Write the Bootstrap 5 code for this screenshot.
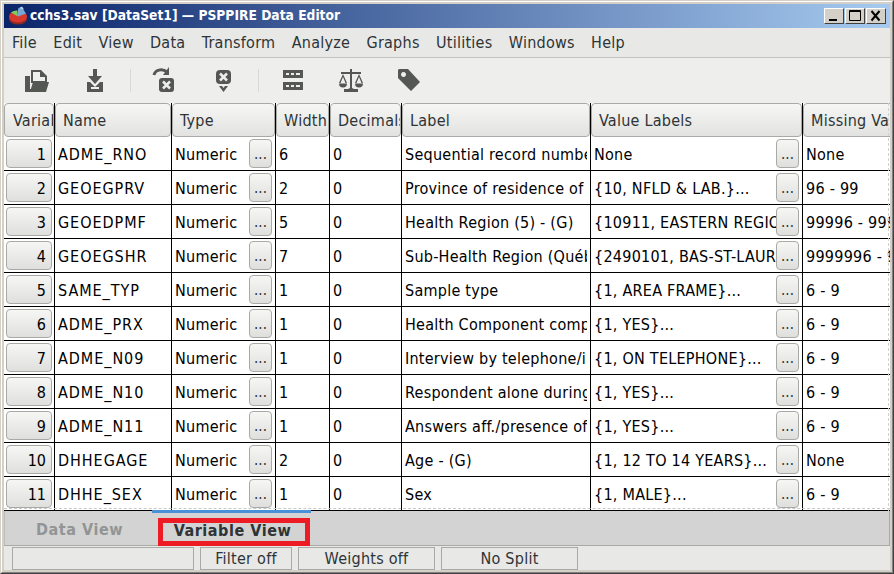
<!DOCTYPE html>
<html lang="en">
<head>
<meta charset="utf-8">
<title>PSPPIRE Data Editor</title>
<link href="https://cdn.jsdelivr.net/npm/bootstrap@5.3.0/dist/css/bootstrap.min.css" rel="stylesheet">
<style>
html,body{margin:0;height:574px;overflow:hidden;background:#d4d0c8;}
body{font-family:"DejaVu Sans Condensed","DejaVu Sans",sans-serif;font-stretch:condensed;font-size:16px;letter-spacing:.25px;color:#2e3436;line-height:1;}
.app-win{width:894px;height:574px;border:1px solid;border-color:#d4d0c8 #404040 #404040 #d4d0c8;}
.app-frame{height:100%;padding:2px;border:1px solid;border-color:#fff #808080 #808080 #fff;display:flex;flex-direction:column;background:#d4d0c8;}
.title-bar{height:24px;flex:none;background:linear-gradient(90deg,#0a246a,#a6caf0);color:#fff;font-weight:700;font-size:13.7px;letter-spacing:0;padding-left:4px;gap:2px;}
.win-btns{margin-left:auto;margin-right:4px;gap:1px;}
.win-btn{width:20px;height:16px;background:#d4d0c8;border:1px solid;border-color:#fff #404040 #404040 #fff;display:block;}
.menu-bar{height:30px;flex:none;background:#e8e8e7;border-bottom:1px solid #c3c3c0;padding-left:8px;gap:16.35px;}
.tool-bar{height:45px;flex:none;background:#eeeeec;position:relative;}
.tool-item{position:absolute;top:8px;width:30px;height:28px;}
.tool-sep{position:absolute;top:11px;width:1px;height:23px;background:#d8d8d6;}
.grid-wrap{height:408px;flex:none;overflow:hidden;background:#fff;position:relative;}
.var-table{table-layout:fixed;width:1000px;border-collapse:separate;border-spacing:0;color:#000;}
.var-table th{height:34px;padding:0;border-right:1px solid #000;font-weight:400;}
.head-box{height:34px;line-height:32px;background:linear-gradient(#f6f6f5,#e2e2e0);border:1px solid #a9a9a6;border-radius:4px;color:#2e3436;padding:1px 0 0 7px;white-space:nowrap;overflow:hidden;}
.var-table th:first-child .head-box{padding-left:8px;}
.var-table td{height:34px;border-right:1px solid #000;border-bottom:1px solid #000;padding:2px 0 0 3px;white-space:nowrap;overflow:hidden;}
.name-col{letter-spacing:.95px;}
.cell-clip{overflow:hidden;margin-right:3px;}
.cell-flex{display:flex;align-items:center;justify-content:space-between;padding-right:3px;height:32px;margin-top:-2px;overflow:hidden;}
.cell-text{overflow:hidden;flex:1;min-width:0;padding-top:2px;}
.dot-btn{flex:none;width:23px;height:29px;padding:0;border:1px solid #a9a9a6;border-radius:4px;background:linear-gradient(#f6f6f5,#dfdfdd);font-size:15px;line-height:24px;color:#2e3436;}
.var-table td.num-cell{padding:0 3px 0 2px;}
.num-btn{display:block;width:46px;height:29px;padding:1px 5px 0 0;border:1px solid #a9a9a6;border-radius:4px;background:linear-gradient(#f6f6f5,#dfdfdd);text-align:right;font-size:16px;color:#000;line-height:27px;}
.edge-line{position:absolute;right:1px;top:0;bottom:0;width:0;border-right:1px dashed #d0d0d0;}
.edge-bottom{position:absolute;left:0;right:0;bottom:2px;height:0;border-bottom:1px dashed #c8c8c8;}
.tab-strip{height:35px;flex:none;background:#d3d3d3;position:relative;border-bottom:1px solid #a9a9a6;border-right:1px solid #a9a9a6;border-left:1px solid #bdbdbb;font-weight:700;letter-spacing:.55px;}
.tab-line{position:absolute;left:147px;top:-1px;width:159px;height:3px;background:#4a90d9;}
.tab-off{position:absolute;left:31px;top:8px;height:26px;line-height:22px;color:#929595;}
.tab-on{position:absolute;left:153px;top:7px;width:152px;height:28px;border:5px solid #ed1c24;line-height:16px;padding-right:3px;text-align:center;color:#2e3436;z-index:2;}
.stat-bar{height:24px;flex:none;background:#e8e8e7;gap:6px;padding-left:8px;padding-top:1px;}
.stat-cell{height:23px;border:1px solid #a9a9a6;text-align:center;line-height:21px;color:#2e3436;}
.w1{width:182px}.w2{width:92px}.w3{width:137px}
</style>
</head>
<body>
<div class="app-win"><div class="app-frame">
  <div class="title-bar d-flex align-items-center">
    <svg width="20" height="20" viewBox="0 0 20 20"><ellipse cx="10" cy="13" rx="9" ry="5.500" fill="#8e2a22"/><ellipse cx="10" cy="10.500" rx="9" ry="6" fill="#d8392f"/><path d="M10 10.500V2.500l4-1 4 6z" fill="#7aa6d6"/><path d="M10 10.500L3 6.500a9 6 0 0 1 6-2z" fill="#7ecb5e"/><path d="M11 2l3-1.500 2 3z" fill="#b6d8f0"/></svg>
    <span>cchs3.sav [DataSet1] — PSPPIRE Data Editor</span>
    <div class="win-btns d-flex">
      <span class="win-btn"><svg width="18" height="14" viewBox="0 0 18 14" class="d-block"><rect x="4" y="10" width="8" height="2" fill="#000"/></svg></span>
      <span class="win-btn"><svg width="18" height="14" viewBox="0 0 18 14" class="d-block"><path d="M3.500 1.500h11v10h-11z M3 2.500h12" fill="none" stroke="#000"/></svg></span>
      <span class="win-btn"><svg width="18" height="14" viewBox="0 0 18 14" class="d-block"><path d="M4.500 2l8 9.500M12.500 2l-8 9.500" stroke="#000" stroke-width="2"/></svg></span>
    </div>
  </div>
  <div class="menu-bar d-flex align-items-center">
    <span>File</span><span>Edit</span><span>View</span><span>Data</span><span>Transform</span><span>Analyze</span><span>Graphs</span><span>Utilities</span><span>Windows</span><span>Help</span>
  </div>
  <div class="tool-bar">
    <svg class="tool-item" style="left:18px" viewBox="0 0 30 28" fill="#555753"><path d="M3 10h5v13h2v3H3z"/><path fill-rule="evenodd" d="M9 4h10l6 6v7H9zM11 6v9h12v-4h-5V6z"/><path d="M11 16h16l-3 10H8z"/></svg>
    <svg class="tool-item" style="left:76px" viewBox="0 0 30 28" fill="#555753"><path d="M13 3h4v7h5l-7 8-7-8h5z"/><path fill-rule="evenodd" d="M7 16h3l5 5 5-5h3v10H7zM11 21v2h8v-2z"/></svg>
    <div class="tool-sep" style="left:126px"></div>
    <svg class="tool-item" style="left:144px" viewBox="0 0 30 28"><path d="M6 9c1-5 8-7 13-3" fill="none" stroke="#555753" stroke-width="3"/><path d="M21 1v8h-6z" fill="#555753"/><rect x="11" y="12" width="15" height="14" rx="3" fill="#555753"/><path d="M15 15.500l7 7m0-7l-7 7" stroke="#eeeeec" stroke-width="2.500"/></svg>
    <svg class="tool-item" style="left:205px" viewBox="0 0 30 28"><rect x="7" y="4" width="15" height="14" rx="4" fill="#555753"/><path d="M11 7.500l7 7m0-7l-7 7" stroke="#eeeeec" stroke-width="2.500"/><path d="M10 20h3l1.500 2 1.500-2h3l-4.500 6z" fill="#555753"/></svg>
    <div class="tool-sep" style="left:254px"></div>
    <svg class="tool-item" style="left:274px" viewBox="0 0 30 28" fill="#555753"><path fill-rule="evenodd" d="M5 4h20v8H5zM8 7v2h3V7zM13 7v2h3V7zM18 7v2h4V7z"/><path fill-rule="evenodd" d="M5 16h20v8H5zM8 19v2h3v-2zM13 19v2h3v-2zM18 19v2h4v-2z"/></svg>
    <svg class="tool-item" style="left:332px" viewBox="0 0 30 28" fill="#555753"><path d="M14 3h2v3h9v2H16v14l2 1h4v3H8v-3h4l2-1V8H5V6h9z"/><path d="M7 8L3 17h1.500L7 11l2.500 6H11zM23 8l-4 9h1.500L23 11l2.500 6H27z"/><path d="M3 17.500h8a4 4 0 0 1-8 0zM19 17.500h8a4 4 0 0 1-8 0z"/></svg>
    <svg class="tool-item" style="left:389px" viewBox="0 0 30 28" fill="#555753"><path fill-rule="evenodd" d="M6 3h9l12 13-9 9L5 12V4zM10.500 6a2.500 2.500 0 1 0 .01 0z"/></svg>
  </div>
  <div class="grid-wrap">
    <table class="var-table">
      <colgroup><col style="width:51px"><col style="width:117px"><col style="width:104px"><col style="width:54px"><col style="width:72px"><col style="width:189px"><col style="width:212px"><col style="width:201px"></colgroup>
      <thead><tr><th><div class="head-box">Variable</div></th><th><div class="head-box">Name</div></th><th><div class="head-box">Type</div></th><th><div class="head-box">Width</div></th><th><div class="head-box">Decimals</div></th><th><div class="head-box">Label</div></th><th><div class="head-box">Value Labels</div></th><th><div class="head-box">Missing Values</div></th></tr></thead>
      <tbody id="rows"></tbody>
    </table>
    <div class="edge-bottom"></div>
    <div class="edge-line"></div>
  </div>
  <div class="tab-strip">
    <div class="tab-line"></div>
    <div class="tab-off">Data View</div>
    <div class="tab-on">Variable View</div>
  </div>
  <div class="stat-bar d-flex">
    <div class="stat-cell w1"></div><div class="stat-cell w2">Filter off</div><div class="stat-cell w3">Weights off</div><div class="stat-cell w3">No Split</div>
  </div>
</div></div>
<script>
const data=[
["ADME_RNO","6","Sequential record number","None","None"],
["GEOEGPRV","2","Province of residence of respondent","{10, NFLD & LAB.}...","96 - 99"],
["GEOEDPMF","5","Health Region (5) - (G)","{10911, EASTERN REGIONAL}...","99996 - 99999"],
["GEOEGSHR","7","Sub-Health Region (Québec)","{2490101, BAS-ST-LAURENT}...","9999996 - 9999999"],
["SAME_TYP","1","Sample type","{1, AREA FRAME}...","6 - 9"],
["ADME_PRX","1","Health Component completed","{1, YES}...","6 - 9"],
["ADME_N09","1","Interview by telephone/in person","{1, ON TELEPHONE}...","6 - 9"],
["ADME_N10","1","Respondent alone during interview","{1, YES}...","6 - 9"],
["ADME_N11","1","Answers aff./presence of others","{1, YES}...","6 - 9"],
["DHHEGAGE","2","Age - (G)","{1, 12 TO 14 YEARS}...","None"],
["DHHE_SEX","1","Sex","{1, MALE}...","6 - 9"]];
document.getElementById('rows').innerHTML=data.map((r,i)=>`<tr><td class="num-cell"><button class="num-btn" type="button">${i+1}</button></td><td class="name-col">${r[0]}</td><td><div class="cell-flex"><span class="cell-text">Numeric</span><button class="dot-btn" type="button">...</button></div></td><td>${r[1]}</td><td>0</td><td><div class="cell-clip">${r[2]}</div></td><td><div class="cell-flex"><span class="cell-text">${r[3].replace(/&/g,'&amp;')}</span><button class="dot-btn" type="button">...</button></div></td><td>${r[4]}</td></tr>`).join('');
</script>
<script src="https://cdn.jsdelivr.net/npm/bootstrap@5.3.0/dist/js/bootstrap.bundle.min.js"></script>
</body>
</html>
